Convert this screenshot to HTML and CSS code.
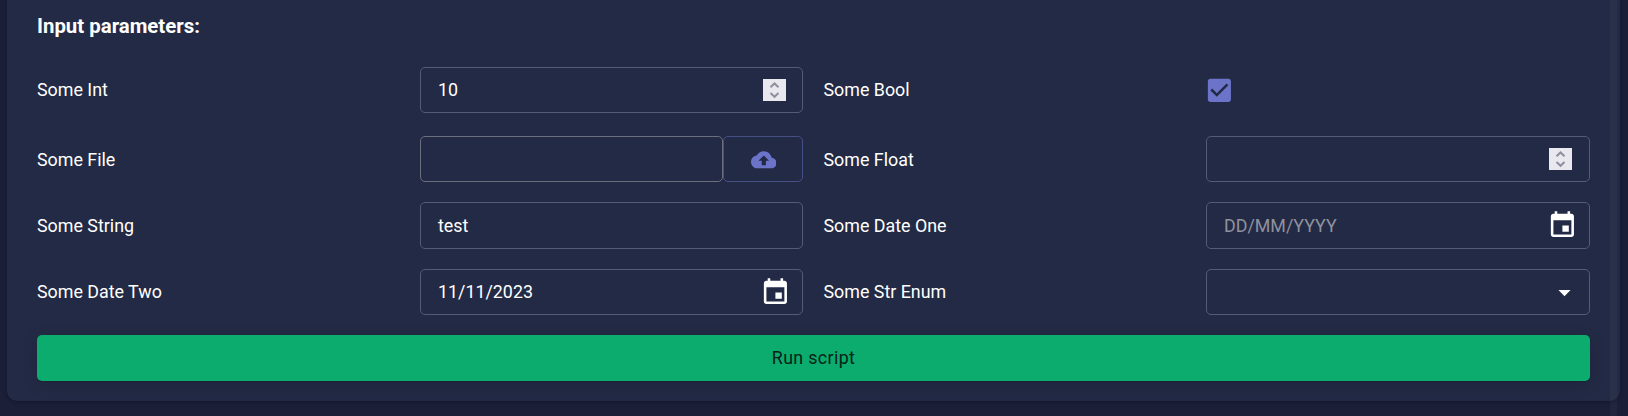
FILE: index.html
```html
<!DOCTYPE html>
<html lang="en">
<head>
<meta charset="utf-8">
<title>Input parameters</title>
<link rel="stylesheet" href="styles.css">
</head>
<body>
<main class="panel">
  <h2 class="title">Input parameters:</h2>
  <form class="params">
    <label class="label">Some Int</label>
    <div class="field"><span class="value">10</span>
      <svg class="spinner" viewBox="0 0 23 22"><path d="M7.5 8.3l4-3.8 4 3.8M7.5 14l4 3.8 4-3.8"/></svg></div>
    <label class="label label-right">Some Bool</label>
    <div class="check-cell"><svg class="icon check" viewBox="0 0 24 24"><path d="M19 3H5c-1.11 0-2 .9-2 2v14c0 1.1.89 2 2 2h14c1.11 0 2-.9 2-2V5c0-1.1-.89-2-2-2zm-9 14l-5-5 1.41-1.41L10 14.17l7.59-7.59L19 8l-9 9z"/></svg></div>

    <label class="label label-low">Some File</label>
    <div class="file">
      <div class="field file-name"></div>
      <button class="upload" type="button" aria-label="Upload"><svg class="icon cloud" viewBox="0 0 24 24"><path d="M19.35 10.04C18.67 6.59 15.64 4 12 4 9.11 4 6.6 5.64 5.35 8.04 2.34 8.36 0 10.91 0 14c0 3.31 2.69 6 6 6h13c2.76 0 5-2.24 5-5 0-2.64-2.05-4.78-4.65-4.96zM14 13v4h-4v-4H7l5-5 5 5h-3z"/></svg></button>
    </div>
    <label class="label label-right label-low">Some Float</label>
    <div class="field"><span class="value"></span>
      <svg class="spinner spinner-inset" viewBox="0 0 23 22"><path d="M7.5 8.3l4-3.8 4 3.8M7.5 14l4 3.8 4-3.8"/></svg></div>

    <label class="label">Some String</label>
    <div class="field"><span class="value">test</span></div>
    <label class="label label-right">Some Date One</label>
    <div class="field"><span class="value placeholder">DD/MM/YYYY</span>
      <svg class="icon calendar" viewBox="0 0 24 24"><path d="M17 12h-5v5h5v-5zM16 1v2H8V1H6v2H5c-1.11 0-1.99.9-1.99 2L3 19c0 1.1.89 2 2 2h14c1.1 0 2-.9 2-2V5c0-1.1-.9-2-2-2h-1V1h-2zm3 18H5V8h14v11z"/></svg></div>

    <label class="label">Some Date Two</label>
    <div class="field"><span class="value">11/11/2023</span>
      <svg class="icon calendar" viewBox="0 0 24 24"><path d="M17 12h-5v5h5v-5zM16 1v2H8V1H6v2H5c-1.11 0-1.99.9-1.99 2L3 19c0 1.1.89 2 2 2h14c1.1 0 2-.9 2-2V5c0-1.1-.9-2-2-2h-1V1h-2zm3 18H5V8h14v11z"/></svg></div>
    <label class="label label-right">Some Str Enum</label>
    <div class="field"><span class="value"></span>
      <svg class="icon arrow" viewBox="0 0 24 24"><path d="M7 10l5 5 5-5z"/></svg></div>
  </form>
  <button class="run" type="button">Run script</button>
</main>
<div class="scrollbar"></div>
</body>
</html>
```
FILE: styles.css
```css
* { box-sizing: border-box; }

body {
  margin: 0;
  height: 416px;
  padding: 0 8px 15px 7px;
  overflow: hidden;
  background: #1b1f38;
  color: #fff;
  font: 17.85px/24px Roboto, sans-serif;
}

.panel {
  height: 401px;
  padding: 14px 30px 20px;
  background: #232a45;
  border-radius: 0 0 10px 10px;
  box-shadow: 0 1px 4px rgba(0, 0, 0, 0.25);
}

.title {
  margin: 0 0 29px;
  font-size: 20.4px;
  line-height: 24px;
  font-weight: 700;
}

.params {
  display: grid;
  grid-template-columns: 383px 383px 403px 384px;
  grid-template-rows: 49px 46px 47px 46px;
  row-gap: 20px;
}

/* The checkbox row is slightly taller than the others. */
.params > :nth-child(-n + 4) { margin-bottom: 3px; }

.label { align-self: center; }
.label-right { padding-left: 20.5px; }
.label-low { padding-top: 2px; }

.field {
  display: flex;
  align-items: center;
  justify-content: space-between;
  padding: 0 11px 0 17px;
  border: 1px solid #555b72;
  border-radius: 5px;
}

.placeholder { color: #8f929e; }

.icon { display: block; fill: currentColor; flex: none; }
.calendar { width: 30.8px; height: 30.8px; }
.arrow { width: 29px; height: 29px; margin-right: -1px; }
.cloud { width: 25.6px; height: 25.6px; margin: 1px 0 0 1px; color: #6b74c8; }

.check-cell { display: flex; align-items: center; }
.check { width: 30.8px; height: 30.8px; margin-left: -2.5px; color: #6b74c8; }

.spinner {
  width: 23px;
  height: 22px;
  margin-right: 5px;
  background: #e9e8ee;
  fill: none;
  stroke: #908f9e;
  stroke-width: 2;
}
.spinner-inset { margin-right: 6px; }

.file { display: flex; }
.file-name { width: 303px; border-color: #6b6e7c; }

.upload {
  display: flex;
  align-items: center;
  justify-content: center;
  width: 80px;
  padding: 0;
  background: none;
  border: 1px solid #474f87;
  border-radius: 5px;
}

.run {
  display: block;
  width: 100%;
  height: 46px;
  margin-top: 20px;
  border: 0;
  border-radius: 5px;
  background: #0bac6d;
  color: #072218;
  font: 17.85px/24px Roboto, sans-serif;
  letter-spacing: 0.35px;
  box-shadow: 0 3px 1px -2px rgba(0, 0, 0, 0.1), 0 4px 16px rgba(0, 0, 0, 0.14);
}

.scrollbar {
  position: absolute;
  top: 0;
  right: 11px;
  width: 7px;
  height: 416px;
  background: rgba(255, 255, 255, 0.03);
}
```
